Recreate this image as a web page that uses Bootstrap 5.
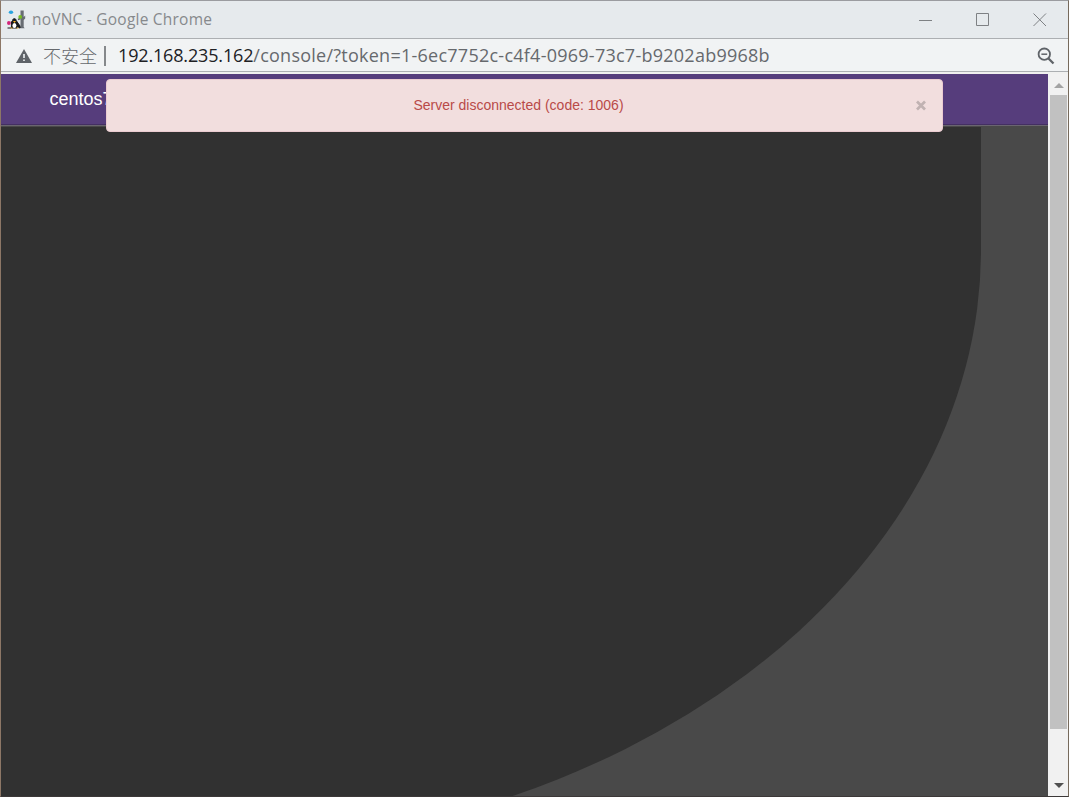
<!DOCTYPE html>
<html lang="en">
<head>
<meta charset="utf-8">
<meta name="viewport" content="width=device-width, initial-scale=1">
<title>noVNC</title>
<link rel="stylesheet" href="https://cdn.jsdelivr.net/npm/bootstrap@5.3.0/dist/css/bootstrap.min.css">
<style>
html,body{height:100%;margin:0}
.win{height:797px;border:1px solid;border-color:#9b9ca0 #766a5c #3c3838 #8d7766;background:#f1f3f4}
.titlebar{height:38px;flex:none;background:#e6eaed;border-bottom:1px solid #acafb2;color:#86898c;font:15.5px/36px "Open Sans","Noto Sans",sans-serif;padding-left:5px}
.title-text{margin-left:6px;margin-top:-2px;letter-spacing:.22px;white-space:nowrap}
.controls{gap:43px;margin-right:21px}
.addr{height:35px;flex:none;background:#f1f3f4;border-bottom:2px solid #f0f0ef;box-shadow:inset 0 -1px #acafb2;font:18px/33px "Open Sans","Noto Sans","Noto Sans CJK SC",sans-serif;color:#66696d;padding:0 13px 0 15px}
.unsafe{font-family:"Noto Sans CJK SC",sans-serif;font-weight:300;margin-left:11px;font-size:18px}
.sep{width:2px;height:20px;background:#85888b;margin:0 12px 0 7px}
.url{white-space:nowrap;letter-spacing:.25px}
.url b{font-weight:400;color:#202124;letter-spacing:-.16px}
.view{min-height:0;position:relative}
.page{background:#494949;overflow:hidden;min-width:0}
.topbar{height:52px;flex:none;background:#563d7c;border-bottom:1px solid #6a6570;box-shadow:inset 0 -1px #432f61;color:#fff;font:18px/50px "Liberation Sans",Arial,sans-serif;padding-left:48.5px}
.screen{width:980px;height:723px;margin-top:1px;flex:none;background:#313131;border-bottom-right-radius:800px 600px}
.notice{position:absolute;left:105px;top:5px;width:837px;height:53px;background:#f2dede;border:1px solid #ebccd1;border-radius:4px;color:#b94a48;font:14px/51px "Liberation Sans",Arial,sans-serif;padding:0 15px}
.scroller{width:20px;flex:none;background:#f1f1f1;padding:0 1px 0 2px}
.arrow{height:21px;padding-top:2px}
.thumb{height:634px;background:#c1c1c1}
svg{display:block;flex:none}
</style>
</head>
<body>
<div class="win d-flex flex-column overflow-hidden">
  <header class="titlebar d-flex align-items-center">
    <svg width="20" height="22" viewBox="0 0 20 22">
      <path d="M14.500 1.500h3.200V8l1.500-1.500v3l-1.500 1.500v7l1 1.200h-5.500l1.300-1.500z" fill="#686d73"/>
      <ellipse cx="5" cy="3.200" rx="2.200" ry="1.700" fill="#28a3df"/>
      <path d="M12 10.500l2.500-1" stroke="#555a60" stroke-width="1.500"/>
      <circle cx="14.200" cy="7.900" r="1.900" fill="#78bd20"/>
      <path d="M1.500 19h4c0-3-.5-5 1-7.500C6.800 9 10 9 10.200 11.500L14 17v2l-3-1.500V19H6" fill="#17181b" stroke="#17181b" stroke-width="1"/>
      <path d="M5 13.500l3-1" stroke="#17181b" stroke-width="1.500"/>
      <ellipse cx="8.400" cy="16.400" rx="2" ry="2.500" fill="#fff"/>
      <path d="M7 12h3l-1.500 2z" fill="#f2ad24"/>
      <path d="M4.500 19h2M10.500 19h2" stroke="#dca02b" stroke-width="1.200"/>
      <circle cx="2.900" cy="14" r="1.900" fill="#d32479"/>
    </svg>
    <span class="title-text">noVNC - Google Chrome</span>
    <div class="controls d-flex ms-auto">
      <svg width="14" height="14"><path d="M0 7.5h13" stroke="#7e8184"/></svg>
      <svg width="14" height="14"><path d="M.5.5h12v12H.5z" fill="none" stroke="#7e8184"/></svg>
      <svg width="14" height="14"><path d="M.5.5l12.5 12.5M13 .5L.5 13" stroke="#7e8184" fill="none"/></svg>
    </div>
  </header>
  <div class="addr d-flex align-items-center">
    <svg width="16" height="14" viewBox="0 0 16 14"><path d="M8 0l8 14H0z" fill="#5f6368"/><path d="M7.2 5h1.6v4H7.2zM7.2 10.5h1.6V12H7.2z" fill="#f1f3f4"/></svg>
    <span class="unsafe">不安全</span><i class="sep"></i>
    <span class="url"><b>192.168.235.162</b>/console/?token=1-6ec7752c-c4f4-0969-73c7-b9202ab9968b</span>
    <svg class="ms-auto" width="18" height="18" viewBox="0 0 18 18" fill="none" stroke="#5f6368"><circle cx="7.3" cy="7.2" r="5.7" stroke-width="1.8"/><path d="M4.4 7.2h5.8" stroke-width="1.5"/><path d="M11.5 11.5l5 5" stroke-width="2.3"/></svg>
  </div>
  <div class="view d-flex flex-grow-1">
    <main class="page d-flex flex-column flex-grow-1">
      <nav class="topbar">centos7</nav>
      <div class="screen"></div>
    </main>
    <div class="notice d-flex align-items-center" role="alert">
      <span class="flex-grow-1 text-center">Server disconnected (code: 1006)</span>
      <svg width="12" height="11" viewBox="0 0 12 11"><path d="M2 1.5l8 8M10 1.5l-8 8" stroke="#c1b2b2" stroke-width="2.7"/></svg>
    </div>
    <aside class="scroller">
      <div class="arrow d-flex justify-content-center align-items-center"><svg width="10" height="5"><path d="M5 0l5 5H0z" fill="#a3a3a3"/></svg></div>
      <div class="thumb"></div>
      <div style="height:45px"></div>
      <div class="arrow d-flex justify-content-center align-items-center"><svg width="10" height="5"><path d="M0 0h10L5 5z" fill="#505050"/></svg></div>
    </aside>
  </div>
</div>
<script src="https://cdn.jsdelivr.net/npm/bootstrap@5.3.0/dist/js/bootstrap.bundle.min.js"></script>
</body>
</html>
